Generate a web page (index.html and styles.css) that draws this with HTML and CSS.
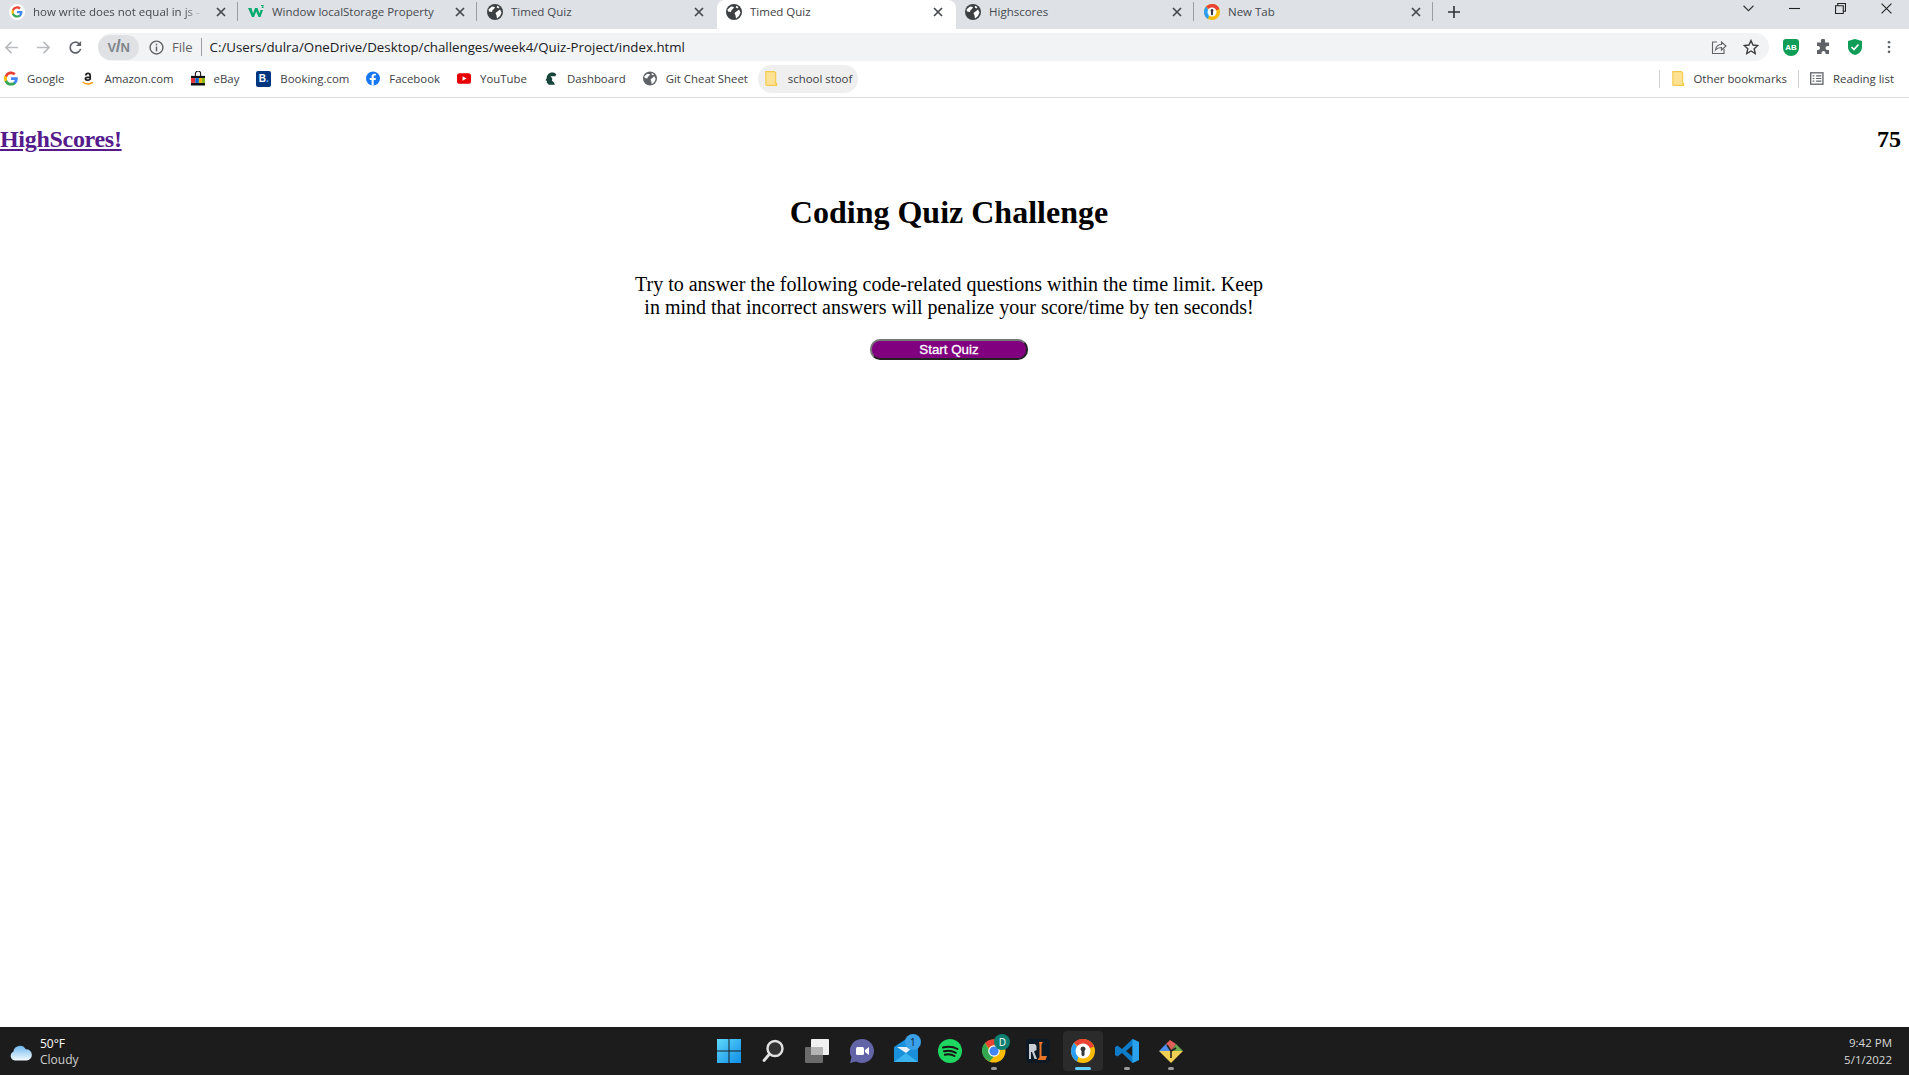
FILE: index.html
```html
<!DOCTYPE html>
<html lang="en">
<head>
<meta charset="utf-8">
<title>Timed Quiz</title>
<link rel="stylesheet" href="styles.css">
</head>
<body>
<svg class="defs" width="0" height="0" aria-hidden="true">
  <defs>
    <symbol id="globe" viewBox="0 0 16 16">
      <circle cx="8" cy="8" r="8" fill="currentColor"/>
      <path d="M1.500 5.500 5 2.500 8 3 7 5 5.500 6 5 8 2 7.500zM8.500 9 13 5.500 14.500 8.500 13 12 10 14.500 9.500 11.500zM10 1.800 12.500 3 11.500 4.500 9.800 3.500z" fill="#fff"/>
    </symbol>
    <symbol id="close" viewBox="0 0 10 10">
      <path d="M1 1 9 9M9 1 1 9" stroke="#45494d" stroke-width="1.700" fill="none"/>
    </symbol>
    <symbol id="folder" viewBox="0 0 14 16">
      <path d="M1.500.7H10.500L12 2.200V13.500H13V15.300H2.500A1 1 0 0 1 1.500 14.300Z" fill="#fde293" stroke="#f2c94c" stroke-width="1.200"/>
    </symbol>
  </defs>
</svg>

<header class="chrome">
  <div class="tabstrip">
    <div class="tab">
      <svg class="favicon" viewBox="0 0 16 16"><circle cx="8" cy="8" r="8" fill="#fff"/><path d="M13.400 8.200c0-.4 0-.8-.1-1.200H8v2.200h3a2.600 2.600 0 0 1-1.100 1.700v1.400h1.800c1-1 1.700-2.400 1.700-4.100z" fill="#4285f4"/><path d="M8 13.600c1.500 0 2.800-.5 3.700-1.300l-1.800-1.400c-.5.300-1.100.5-1.900.5-1.500 0-2.700-1-3.100-2.300H3v1.400A5.600 5.600 0 0 0 8 13.600z" fill="#34a853"/><path d="M4.900 9.100a3.300 3.300 0 0 1 0-2.200V5.500H3a5.600 5.600 0 0 0 0 5z" fill="#fbbc05"/><path d="M8 4.600c.8 0 1.600.3 2.200.8l1.600-1.600A5.600 5.600 0 0 0 3 5.500l1.900 1.400C5.300 5.600 6.500 4.600 8 4.600z" fill="#ea4335"/></svg>
      <span class="tab-title tab-fade">how write does not equal in js - Google Search</span>
      <svg class="tab-close"><use href="#close"/></svg>
      <i class="tab-sep"></i>
    </div>
    <div class="tab">
      <svg class="favicon" viewBox="0 0 16 16"><path d="M0 4H3.500L5 9.500 7 4H9.500L11.500 9.500 12.500 6H15L12.500 13H10.500L8.200 7.500 6 13H4z" fill="#04aa6d"/><path d="M13 1.500h2.500L14 3.500h1.500" stroke="#04aa6d" fill="none"/></svg>
      <span class="tab-title">Window localStorage Property</span>
      <svg class="tab-close"><use href="#close"/></svg>
      <i class="tab-sep"></i>
    </div>
    <div class="tab">
      <svg class="favicon"><use href="#globe"/></svg>
      <span class="tab-title">Timed Quiz</span>
      <svg class="tab-close"><use href="#close"/></svg>
    </div>
    <div class="tab tab-active">
      <svg class="favicon"><use href="#globe"/></svg>
      <span class="tab-title">Timed Quiz</span>
      <svg class="tab-close"><use href="#close"/></svg>
    </div>
    <div class="tab">
      <svg class="favicon"><use href="#globe"/></svg>
      <span class="tab-title">Highscores</span>
      <svg class="tab-close"><use href="#close"/></svg>
      <i class="tab-sep"></i>
    </div>
    <div class="tab">
      <svg class="favicon" viewBox="0 0 16 16"><circle cx="8" cy="8" r="8" fill="#fbbc05"/><path d="M8 0a8 8 0 0 1 7.500 5L8 8 2 2.500A8 8 0 0 1 8 0z" fill="#ea4335"/><path d="M0 8a8 8 0 0 1 2-5.500L6 8l-2 7A8 8 0 0 1 0 8z" fill="#2a9df4"/><circle cx="8" cy="8" r="4.500" fill="#fff"/><path d="M8 5a1.500 1.500 0 0 1 1 2.600V10.500L8 11.500 7 10.500V7.600A1.500 1.500 0 0 1 8 5z" fill="#33373b"/></svg>
      <span class="tab-title">New Tab</span>
      <svg class="tab-close"><use href="#close"/></svg>
      <i class="tab-sep"></i>
    </div>
    <svg class="new-tab" viewBox="0 0 12 12"><path d="M6 0V12M0 6H12" stroke="#303336" stroke-width="1.600"/></svg>
    <div class="window-controls">
      <svg class="win-icon" viewBox="0 0 10 6"><path d="M.5.5 5 5 9.500.5" stroke="#333" fill="none"/></svg>
      <svg class="win-icon" viewBox="0 0 10 10"><path d="M0 5H10" stroke="#222"/></svg>
      <svg class="win-icon" viewBox="0 0 10 10"><path d="M.5 2.500H7.500V9.500H.5ZM2.500 2.500V.5H9.500V7.500H7.500" stroke="#222" fill="none"/></svg>
      <svg class="win-icon" viewBox="0 0 10 10"><path d="M.5.5 9.500 9.500M9.500.5.5 9.500" stroke="#222" fill="none"/></svg>
    </div>
  </div>

  <div class="toolbar">
    <svg class="nav-icon" viewBox="0 0 16 16"><path d="M15 8H2M8 2 2 8 8 14" stroke="#b9bbbe" stroke-width="1.800" fill="none"/></svg>
    <svg class="nav-icon" viewBox="0 0 16 16"><path d="M1 8H14M8 2 14 8 8 14" stroke="#b9bbbe" stroke-width="1.800" fill="none"/></svg>
    <svg class="nav-icon" viewBox="0 0 16 16"><path d="M13.500 9.500A5.700 5.700 0 1 1 12 4" stroke="#5f6368" stroke-width="1.800" fill="none"/><path d="M14 1V6.500H8.500z" fill="#5f6368"/></svg>
    <div class="omnibox">
      <span class="vpn-pill"><span class="vpn-text">V<span class="vpn-slash">/</span>N</span></span>
      <svg class="info-icon" viewBox="0 0 14 14"><circle cx="7" cy="7" r="6" stroke="#5f6368" stroke-width="1.300" fill="none"/><path d="M7 6V10.500M7 3.500V5" stroke="#5f6368" stroke-width="1.400"/></svg>
      <span class="scheme">File</span>
      <i class="scheme-sep"></i>
      <span class="url">C:/Users/dulra/OneDrive/Desktop/challenges/week4/Quiz-Project/index.html</span>
      <svg class="omni-share" viewBox="0 0 16 16"><path d="M6 3H1.500V14.500H13V10" stroke="#5f6368" stroke-width="1.100" fill="none"/><path d="M4.500 11C5 7.500 7.500 5.500 10.500 5.500V3L15 7 10.500 11V8.500C8 8.500 6 9.200 4.500 11z" stroke="#5f6368" stroke-width="1.100" fill="none"/></svg>
      <svg class="omni-star" viewBox="0 0 16 16"><path d="M8 1.500 10 6 14.800 6.500 11.200 9.700 12.200 14.500 8 12 3.800 14.500 4.800 9.700 1.200 6.500 6 6z" stroke="#3c4043" stroke-width="1.400" fill="none"/></svg>
    </div>
    <div class="extensions">
      <span class="shield">AB</span>
      <svg class="ext-icon" viewBox="0 0 16 16"><path d="M6 1.500a2 2 0 0 1 4 0V3.500H14V7h-1.500a2 2 0 0 0 0 4H14V15H10.500V14a2 2 0 0 0-4 0V15H2V11h1a2 2 0 0 0 0-4H2V3.500H6z" fill="#5f6368"/></svg>
      <svg class="ext-icon" viewBox="0 0 16 16"><path d="M8 0 15 2V8C15 12 12 15 8 16 4 15 1 12 1 8V2z" fill="#0f9d58"/><path d="M4.500 8 7 10.500 11.500 5.500" stroke="#fff" stroke-width="1.700" fill="none"/></svg>
      <svg class="ext-menu" viewBox="0 0 4 16"><circle cx="2" cy="2.500" r="1.500" fill="#5f6368"/><circle cx="2" cy="8" r="1.500" fill="#5f6368"/><circle cx="2" cy="13.500" r="1.500" fill="#5f6368"/></svg>
    </div>
  </div>

  <nav class="bookmarks">
    <a class="bm">
      <svg class="bm-icon" viewBox="2.400 2.400 11.200 11.200"><path d="M13.400 8.200c0-.4 0-.8-.1-1.200H8v2.200h3a2.600 2.600 0 0 1-1.100 1.700v1.400h1.800c1-1 1.700-2.400 1.700-4.100z" fill="#4285f4"/><path d="M8 13.600c1.500 0 2.800-.5 3.700-1.300l-1.800-1.400c-.5.300-1.100.5-1.900.5-1.500 0-2.700-1-3.100-2.300H3v1.400A5.600 5.600 0 0 0 8 13.600z" fill="#34a853"/><path d="M4.900 9.100a3.300 3.300 0 0 1 0-2.200V5.500H3a5.600 5.600 0 0 0 0 5z" fill="#fbbc05"/><path d="M8 4.600c.8 0 1.600.3 2.200.8l1.600-1.600A5.600 5.600 0 0 0 3 5.500l1.900 1.400C5.300 5.600 6.500 4.600 8 4.600z" fill="#ea4335"/></svg>
      <span>Google</span>
    </a>
    <a class="bm">
      <svg class="bm-icon" viewBox="0 0 16 16"><path d="M10.500 9.500V4.500C10.500 3 9.500 2 8 2S5.500 3 5.500 4.500M5 8C5 6.500 7 6.300 10.500 6.300M10.500 8.500C9 10.500 5 10.500 5 8" stroke="#222" stroke-width="2" fill="none"/><path d="M2 12C6 15 10 15 13.500 12.500" stroke="#f90" stroke-width="1.600" fill="none"/></svg>
      <span>Amazon.com</span>
    </a>
    <a class="bm">
      <svg class="bm-icon" viewBox="0 0 16 16"><rect y="5" width="16" height="2.500" fill="#111"/><rect y="13" width="16" height="3" fill="#111"/><path d="M5 5V2.500a3 3 0 0 1 6 0V5" stroke="#111" stroke-width="1.200" fill="none"/><rect y="7.500" width="5" height="5.500" fill="#e53238"/><rect x="5" y="7.500" width="4" height="5.500" fill="#0064d2"/><rect x="9" y="7.500" width="3.500" height="5.500" fill="#f5af02"/><rect x="12.500" y="7.500" width="3.500" height="5.500" fill="#86b817"/></svg>
      <span>eBay</span>
    </a>
    <a class="bm">
      <span class="booking-icon">B<span class="booking-dot">.</span></span>
      <span>Booking.com</span>
    </a>
    <a class="bm">
      <svg class="bm-icon" viewBox="0 0 16 16"><circle cx="8" cy="8" r="8" fill="#1877f2"/><path d="M8.800 16V9.700H11L11.300 7.300H8.800V5.900C8.800 5.200 9.100 4.700 10 4.700H11.400V2.600C11 2.500 10.300 2.500 9.600 2.500 7.700 2.500 6.400 3.600 6.400 5.700V7.300H4.300V9.700H6.400V16z" fill="#fff"/></svg>
      <span>Facebook</span>
    </a>
    <a class="bm">
      <svg class="bm-icon" viewBox="0 0 16 16"><rect y="2" width="16" height="12" rx="3" fill="#e60000"/><path d="M6.300 5.300 11 8 6.300 10.700z" fill="#fff"/></svg>
      <span>YouTube</span>
    </a>
    <a class="bm">
      <svg class="bm-icon" viewBox="0 0 16 16"><path d="M14 3C12.500 1 9.500.5 7 1.500 4.500 2.500 3 5 3 8L1.500 10 3.500 10.800 3 12.500 5.500 15H12.500L11 12 9 10.500 9.500 8 7.500 5.500 13 5.500z" fill="#18453b"/></svg>
      <span>Dashboard</span>
    </a>
    <a class="bm">
      <svg class="bm-icon bm-globe"><use href="#globe"/></svg>
      <span>Git Cheat Sheet</span>
    </a>
    <a class="bm bm-folder">
      <svg class="bm-icon"><use href="#folder"/></svg>
      <span>school stoof</span>
    </a>
    <div class="bm-right">
      <i class="bm-sep"></i>
      <a class="bm bm-other">
        <svg class="bm-icon"><use href="#folder"/></svg>
        <span>Other bookmarks</span>
      </a>
      <i class="bm-sep"></i>
      <a class="bm bm-reading">
        <svg class="bm-icon" viewBox="0 0 16 16"><rect x=".8" y="1.500" width="14" height="13" stroke="#5f6368" stroke-width="1.500" fill="none"/><path d="M3 5H5M7 5H13M3 8H5M7 8H13M3 11H5M7 11H13" stroke="#5f6368" stroke-width="1.300"/></svg>
        <span>Reading list</span>
      </a>
    </div>
  </nav>
</header>

<main class="page">
  <div class="page-top">
    <a class="highscores" href="#">HighScores!</a>
    <span class="timer">75</span>
  </div>
  <section class="quiz">
    <h1 class="quiz-title">Coding Quiz Challenge</h1>
    <p class="quiz-text">Try to answer the following code-related questions within the time limit. Keep in mind that incorrect answers will penalize your score/time by ten seconds!</p>
    <button class="start-btn" type="button">Start Quiz</button>
  </section>
</main>

<footer class="taskbar">
  <div class="weather">
    <svg class="weather-icon" viewBox="0 0 24 18"><defs><linearGradient id="cl" x1="0" y1="0" x2="0" y2="1"><stop offset="0" stop-color="#6fb9ef"/><stop offset="1" stop-color="#f4fbff"/></linearGradient></defs><path d="M6 17.500A5 5 0 0 1 4.500 8 7 7 0 0 1 17.500 5.500 6 6 0 0 1 18.500 17.500z" fill="url(#cl)"/></svg>
    <div class="weather-text"><span class="temp">50°F</span><span class="cond">Cloudy</span></div>
  </div>
  <div class="task-icons">
    <span class="task">
      <svg class="task-svg" viewBox="0 0 24 24"><defs><linearGradient id="wn" x1="0" y1="0" x2="1" y2="1"><stop offset="0" stop-color="#5fd8fb"/><stop offset="1" stop-color="#0f8de8"/></linearGradient></defs><path d="M0 0H11.500V11.500H0ZM12.500 0H24V11.500H12.500ZM0 12.500H11.500V24H0ZM12.500 12.500H24V24H12.500Z" fill="url(#wn)"/></svg>
    </span>
    <span class="task">
      <svg class="task-svg" viewBox="0 0 24 24"><circle cx="14" cy="9.500" r="7.500" stroke="#e2e2e2" stroke-width="2.400" fill="#333"/><path d="M8.500 15 3 21.500" stroke="#e2e2e2" stroke-width="2.800" stroke-linecap="round"/></svg>
    </span>
    <span class="task">
      <svg class="task-svg" viewBox="0 0 24 24"><rect x="6" width="18" height="16" rx="1" fill="#f0f0f0"/><rect x="0" y="8" width="18" height="16" rx="1" fill="#6b6b6b"/><rect x="6" y="8" width="12" height="8" fill="#b4b4b4"/></svg>
    </span>
    <span class="task">
      <svg class="task-svg" viewBox="0 0 24 24"><path d="M12 0A12 12 0 1 1 6 22.400L0 24 1.500 18A12 12 0 0 1 12 0z" fill="#6264a7"/><rect x="6" y="8" width="8" height="8" rx="1.500" fill="#fff"/><path d="M15 11 19 8V16L15 13z" fill="#fff"/></svg>
    </span>
    <span class="task">
      <svg class="task-svg" viewBox="0 0 24 24"><path d="M0 8 12 0 24 8V23H0z" fill="#1a8fdc"/><path d="M3 8H19L12 14z" fill="#e8f3fb"/><path d="M0 23 12 14 24 23z" fill="#3ab3ee"/></svg>
      <span class="badge badge-mail">1</span>
    </span>
    <span class="task">
      <svg class="task-svg" viewBox="0 0 24 24"><circle cx="12" cy="12" r="12" fill="#1ed760"/><path d="M5 8.500C10 7 15 7.500 19.500 10M6 12.300C10 11.200 14 11.600 17.800 13.800M6.800 15.800C10 15 13.500 15.300 16.500 17" stroke="#191414" stroke-width="2" stroke-linecap="round" fill="none"/></svg>
    </span>
    <span class="task task-open">
      <svg class="task-svg" viewBox="0 0 24 24"><circle cx="12" cy="12" r="11.500" fill="#fbbc05"/><path d="M12 .5A11.500 11.500 0 0 1 22 6.500H12A5.500 5.500 0 0 0 7 9.500L3 3.800A11.500 11.500 0 0 1 12 .5z" fill="#ea4335"/><path d="M3 3.800 7 10.500 11.500 18 7.500 22.500A11.500 11.500 0 0 1 3 3.800z" fill="#34a853"/><circle cx="12" cy="12" r="5.800" fill="#fff"/><circle cx="12" cy="12" r="4.600" fill="#4285f4"/></svg>
      <span class="badge badge-profile">D</span>
    </span>
    <span class="task">
      <svg class="task-svg" viewBox="0 0 24 24"><rect width="24" height="24" rx="3" fill="#0d1a26"/><path d="M3 5H9L10.500 7V11L8 12.500 11 20H8.500L6 13H5V20H3z" fill="#c7cdd2"/><path d="M13 3H17L15.500 5.500V17H21L19.500 21H11.500L13.500 18V6z" fill="#e8742a"/></svg>
    </span>
    <span class="task task-active">
      <svg class="task-svg" viewBox="0 0 24 24"><circle cx="12" cy="12" r="12" fill="#fbbc05"/><path d="M12 0A12 12 0 0 1 23 7.500L12 12 3 3.800A12 12 0 0 1 12 0z" fill="#ea4335"/><path d="M0 12A12 12 0 0 1 3 3.800L9 12 6 22.500A12 12 0 0 1 0 12z" fill="#2a9df4"/><circle cx="12" cy="12" r="7.500" fill="#fff"/><path d="M12 7.500A2.500 2.500 0 0 1 13.500 12V16L12 17.500 10.500 16V12A2.500 2.500 0 0 1 12 7.500z" fill="#33373b"/></svg>
    </span>
    <span class="task task-open">
      <svg class="task-svg" viewBox="0 0 24 24"><path d="M17.500 0 24 3V21L17.500 24 7 14 2.500 17.500 0 16V8L2.500 6.500 7 10z" fill="#0e7cc9"/><path d="M17.500 6.500 11 12 17.500 17.500z" fill="#1e1e1e"/><path d="M17.500 0 24 3V21L17.500 24z" fill="#2ba2ef"/></svg>
    </span>
    <span class="task task-open">
      <svg class="task-svg" viewBox="0 0 24 24"><path d="M12 12 7 5 11 1 17 5z" fill="#e0605a"/><path d="M12 12 0 12 7 5z" fill="#4f8ff0"/><path d="M12 12 17 5 24 12z" fill="#6aa84f"/><path d="M12 12 24 12 12 24 0 12z" fill="#f1cf52"/><path d="M8 6 12 12V19M12 12 17 9" stroke="#222" stroke-width="1.600" fill="none"/></svg>
    </span>
  </div>
  <div class="clock"><span>9:42 PM</span><span>5/1/2022</span></div>
</footer>
</body>
</html>
```

FILE: styles.css
```css
* { box-sizing: border-box; }

html, body { margin: 0; height: 100%; }

body {
  display: flex;
  flex-direction: column;
  height: 1075px;
  overflow: hidden;
  background: #fff;
  font-family: "Liberation Serif", serif;
}

.defs { position: absolute; }

/* browser chrome */
.chrome {
  flex: none;
  font-family: "Open Sans", "Noto Sans", sans-serif;
  color: #3c4043;
}

.tabstrip {
  display: flex;
  align-items: flex-start;
  height: 29px;
  background: #dee1e6;
}

.tab {
  position: relative;
  display: flex;
  align-items: center;
  flex: none;
  width: 239px;
  height: 29px;
  padding: 0 13px 6px 9px;
  font-size: 11.500px;
  color: #45494e;
}
.tab-active {
  background: #fff;
  border-radius: 8px 8px 0 0;
  color: #3c4043;
}

.favicon { flex: none; width: 16px; height: 16px; margin-right: 8px; color: #3c4043; }
.tab-title { flex: 1; overflow: hidden; white-space: nowrap; }
.tab-fade {
  -webkit-mask-image: linear-gradient(to right, #000 88%, transparent);
  mask-image: linear-gradient(to right, #000 88%, transparent);
}
.tab-close { flex: none; width: 10px; height: 10px; margin-left: 12px; }
.tab-sep {
  position: absolute;
  right: 1px;
  top: 2px;
  width: 1px;
  height: 19px;
  background: #9a9da1;
}

.new-tab { flex: none; width: 12px; height: 12px; margin: 6px 0 0 14px; }

.window-controls {
  display: flex;
  align-items: center;
  gap: 35px;
  margin-left: auto;
  padding: 3px 17px 0 0;
}
.win-icon { width: 11px; height: 11px; }

.toolbar {
  display: flex;
  align-items: center;
  height: 32px;
  padding: 4px 0 0 4px;
  background: #fff;
}
.nav-icon { flex: none; width: 15px; height: 15px; margin-right: 17px; }
.nav-icon:nth-child(3) { margin-right: 15px; }

.omnibox {
  display: flex;
  align-items: center;
  flex: 1;
  height: 28px;
  padding-right: 2px;
  background: #f1f3f4;
  border-radius: 14px;
}
.vpn-pill {
  display: flex;
  align-items: center;
  justify-content: center;
  flex: none;
  width: 41px;
  height: 25px;
  background: #dfe1e5;
  border-radius: 13px;
}
.vpn-text {
  font-family: "Liberation Sans", sans-serif;
  font-size: 13px;
  font-weight: 700;
  color: #80868b;
  letter-spacing: -0.4px;
}
.vpn-slash { font-size: 18px; line-height: 14px; }
.info-icon { flex: none; width: 15px; height: 15px; margin: 0 8px 0 10px; }
.scheme { font-size: 13px; color: #5f6368; }
.scheme-sep { width: 1px; height: 18px; background: #9aa0a6; margin: 0 8px 0 8px; }
.url { flex: 1; font-size: 13.300px; color: #202124; white-space: nowrap; }
.omni-share { flex: none; width: 16px; height: 16px; margin-right: 16px; }
.omni-star { flex: none; width: 16px; height: 16px; margin-right: 8px; }

.extensions {
  display: flex;
  align-items: center;
  flex: none;
  gap: 16px;
  padding: 0 18px 0 14px;
}
.shield {
  display: flex;
  align-items: center;
  justify-content: center;
  width: 16px;
  height: 17px;
  background: #0f9d58;
  border-radius: 3px 3px 8px 8px;
  color: #fff;
  font-family: "Liberation Sans", sans-serif;
  font-size: 8px;
  font-weight: 700;
}
.ext-icon { width: 16px; height: 16px; }
.ext-menu { width: 4px; height: 14px; margin-left: 8px; }

.bookmarks {
  display: flex;
  align-items: center;
  height: 37px;
  padding: 0 15px 1px 4px;
  background: #fff;
  border-bottom: 1px solid #dadce0;
  font-size: 11.400px;
  color: #3c4043;
}
.bm {
  display: flex;
  align-items: center;
  flex: none;
  gap: 9px;
  margin-right: 17px;
  white-space: nowrap;
}
.bm-icon { flex: none; width: 14px; height: 15px; }
.bm-globe { color: #5f6368; }
.booking-icon {
  display: flex;
  align-items: center;
  justify-content: center;
  flex: none;
  width: 15px;
  height: 16px;
  background: #003580;
  border-radius: 2px;
  color: #fff;
  font-family: "Liberation Sans", sans-serif;
  font-size: 10px;
  font-weight: 700;
}
.booking-dot { color: #5bbaff; }
.bm-folder {
  height: 28px;
  gap: 10px;
  padding: 0 6px;
  margin: 0 0 0 -7px;
  background: #efefef;
  border-radius: 14px;
}
.bm-right { display: flex; align-items: center; margin-left: auto; }
.bm-sep { width: 1px; height: 18px; background: #d0d2d6; }
.bm-other { margin: 0 11px; gap: 8px; }
.bm-reading { margin: 0 0 0 11px; gap: 9px; }

/* page content */
.page { flex: 1; }

.page-top {
  display: flex;
  justify-content: space-between;
  align-items: center;
  padding: 27px 8px 0 0;
  font-size: 24px;
  font-weight: 700;
  line-height: 28px;
}
.highscores { color: #551a8b; letter-spacing: -0.3px; }
.timer { color: #000; }

.quiz {
  display: flex;
  flex-direction: column;
  align-items: center;
  padding-right: 11px;
}
.quiz-title {
  margin: 41px 0 0;
  font-size: 32px;
  line-height: 37px;
}
.quiz-text {
  width: 640px;
  margin: 42px 0 0;
  font-size: 20px;
  line-height: 23px;
  text-align: center;
}
.start-btn {
  width: 158px;
  height: 21px;
  margin-top: 20px;
  padding: 0;
  background: #800080;
  border: 2px outset #767676;
  border-radius: 10px;
  color: #fff;
  font-family: "Liberation Sans", sans-serif;
  font-size: 13.333px;
  font-weight: 400;
  line-height: 14px;
  -webkit-text-stroke: 0.3px #fff;
}

/* taskbar */
.taskbar {
  position: relative;
  display: flex;
  align-items: center;
  flex: none;
  height: 48px;
  background: #1c1c1c;
  color: #fff;
  font-family: "Open Sans", "Noto Sans", sans-serif;
  font-size: 12px;
}
.weather { display: flex; align-items: center; gap: 8px; padding: 2px 0 0 9px; }
.weather-icon { width: 23px; height: 17px; }
.weather-text { display: flex; flex-direction: column; line-height: 16px; }
.temp { color: #fff; }
.cond { color: #cfcfcf; }

.task-icons {
  position: absolute;
  left: 707px;
  top: 0;
  display: flex;
  align-items: center;
  height: 48px;
}
.task {
  position: relative;
  display: flex;
  align-items: center;
  justify-content: center;
  width: 44.200px;
  height: 40px;
}
.task-svg { position: relative; width: 24px; height: 24px; }
.task-open::after,
.task-active::after {
  content: "";
  position: absolute;
  left: 50%;
  bottom: 1px;
  width: 6px;
  height: 3px;
  margin-left: -3px;
  border-radius: 2px;
  background: #9a9a9a;
}
.task-active::before {
  content: "";
  position: absolute;
  inset: 0 2px;
  background: #2b2b2b;
  border-radius: 4px;
}
.task-active::after { width: 16px; margin-left: -8px; background: #60cdff; }
.badge {
  position: absolute;
  display: flex;
  align-items: center;
  justify-content: center;
  width: 16px;
  height: 16px;
  border-radius: 50%;
  color: #fff;
  font-size: 10px;
}
.badge-mail { top: 3px; right: 7px; background: #3aa0e8; color: #123; }
.badge-profile { top: 3px; right: 6px; background: #0d8072; }

.clock {
  display: flex;
  flex-direction: column;
  align-items: flex-end;
  margin-left: auto;
  padding-right: 17px;
  font-size: 11.500px;
  line-height: 17px;
  color: #d8d8d8;
}
```
